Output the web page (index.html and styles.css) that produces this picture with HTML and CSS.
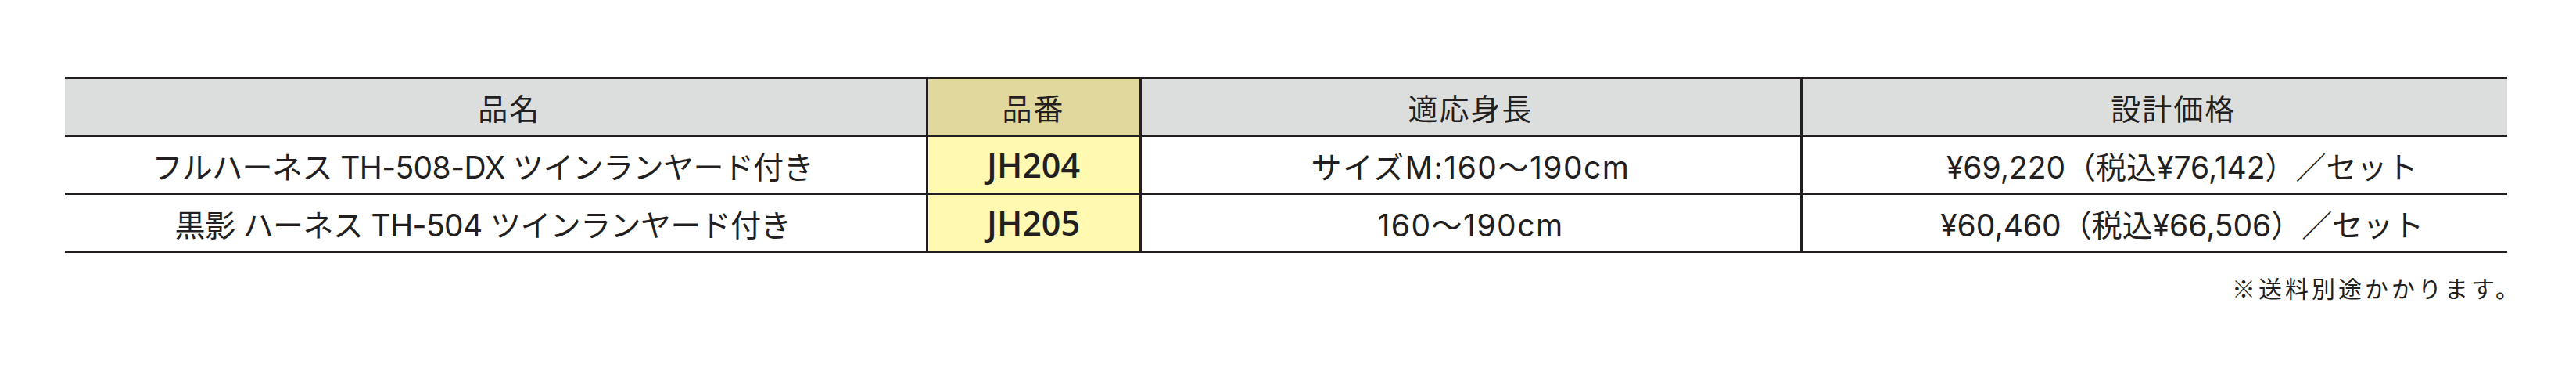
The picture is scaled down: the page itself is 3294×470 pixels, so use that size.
FILE: index.html
```html
<!DOCTYPE html>
<html lang="ja">
<head>
<meta charset="utf-8">
<title>ハーネス 価格表</title>
<link rel="stylesheet" href="styles.css">
</head>
<body>
<div class="page">
  <table class="spec">
    <colgroup>
      <col class="w-name">
      <col class="w-code">
      <col class="w-size">
      <col class="w-price">
    </colgroup>
    <thead>
      <tr>
        <th class="c-name">品名</th>
        <th class="c-code">品番</th>
        <th class="c-size">適応身長</th>
        <th class="c-price">設計価格</th>
      </tr>
    </thead>
    <tbody>
      <tr>
        <td class="c-name">フルハーネス TH-508-DX ツインランヤード付き</td>
        <td class="c-code">JH204</td>
        <td class="c-size">サイズM:160〜190cm</td>
        <td class="c-price">¥69,220（税込¥76,142）／セット</td>
      </tr>
      <tr>
        <td class="c-name">黒影 ハーネス TH-504 ツインランヤード付き</td>
        <td class="c-code">JH205</td>
        <td class="c-size">160〜190cm</td>
        <td class="c-price">¥60,460（税込¥66,506）／セット</td>
      </tr>
    </tbody>
  </table>
  <p class="note">※送料別途かかります。</p>
</div>
</body>
</html>
```
FILE: styles.css
```css
html, body {
  margin: 0;
  padding: 0;
  background: #ffffff;
}

body {
  color: #231f20;
  font-family: "Inter", "Noto Sans CJK JP", sans-serif;
}

.page {
  width: 3123px;
  margin-left: 83px;
  padding-top: 98px;
}

.spec {
  width: 3123px;
  border-collapse: collapse;
  table-layout: fixed;
}

.w-name { width: 1102px; }
.w-code { width: 273px; }
.w-size { width: 845px; }
.w-price { width: 903px; }

.spec th,
.spec td {
  height: 71px;
  padding: 0;
  border-top: 3px solid #231f20;
  border-bottom: 3px solid #231f20;
  border-left: 3px solid #231f20;
  border-right: 3px solid #231f20;
  text-align: center;
  vertical-align: middle;
  font-size: 39px;
  font-weight: 400;
  white-space: nowrap;
}

.spec th:first-child,
.spec td:first-child {
  border-left: none;
}

.spec th:last-child,
.spec td:last-child {
  border-right: none;
}

.spec th {
  background: #dcdddd;
  font-family: "Noto Sans CJK JP", sans-serif;
  font-size: 38px;
  letter-spacing: 2px;
}

.spec th.c-code {
  background: #e0d89c;
}

.spec td.c-code {
  background: #fff9b1;
  font-family: "Open Sans", "Noto Sans", sans-serif;
  font-weight: 600;
  font-size: 43px;
}

.spec td.c-name {
  letter-spacing: -0.6px;
}

.spec td.c-size {
  letter-spacing: 1.5px;
}

.spec th.c-name { padding-left: 36px; }
.spec td.c-name { padding-right: 32px; }
.spec th.c-price { padding-left: 48px; }
.spec td.c-price { padding-left: 70px; }

.note {
  margin: 22px -19px 0 0;
  text-align: right;
  font-family: "Noto Sans CJK JP", sans-serif;
  font-size: 30px;
  letter-spacing: 4px;
}
```
